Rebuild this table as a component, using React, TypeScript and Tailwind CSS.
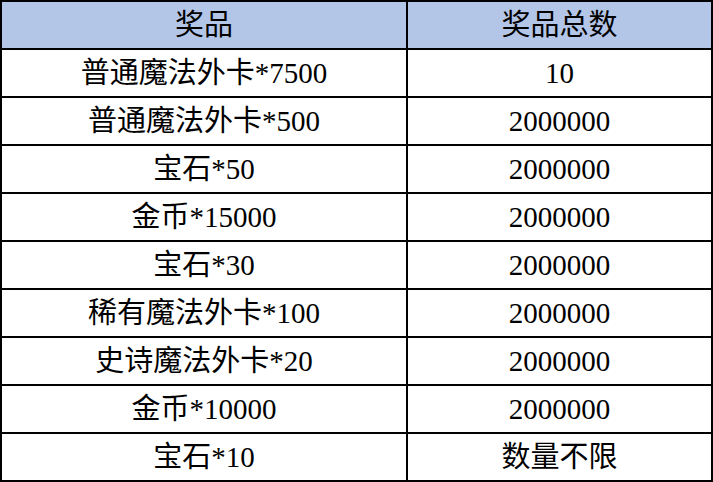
const rows: [string, string][] = [
  ["普通魔法外卡*7500", "10"],
  ["普通魔法外卡*500", "2000000"],
  ["宝石*50", "2000000"],
  ["金币*15000", "2000000"],
  ["宝石*30", "2000000"],
  ["稀有魔法外卡*100", "2000000"],
  ["史诗魔法外卡*20", "2000000"],
  ["金币*10000", "2000000"],
  ["宝石*10", "数量不限"],
];

function Row({ a, b, head }: { a: string; b: string; head?: boolean }) {
  return (
    <div className={`flex shrink-0 ${head ? "h-[46px] bg-[#b4c6e7]" : "h-[48px] border-t-2 border-black bg-white"}`}>
      <div className="w-[406px] shrink-0 border-r-2 border-black flex items-center justify-center">{a}</div>
      <div className="flex-1 flex items-center justify-center">{b}</div>
    </div>
  );
}

export default function App() {
  return (
    <div className="w-[713px] h-[482px] border-2 border-black bg-white flex flex-col text-black text-[29px] leading-none font-[Liberation_Serif,Noto_Sans_CJK_SC,serif]">
      <Row a="奖品" b="奖品总数" head />
      {rows.map(([name, count]) => (
        <Row key={name} a={name} b={count} />
      ))}
    </div>
  );
}
